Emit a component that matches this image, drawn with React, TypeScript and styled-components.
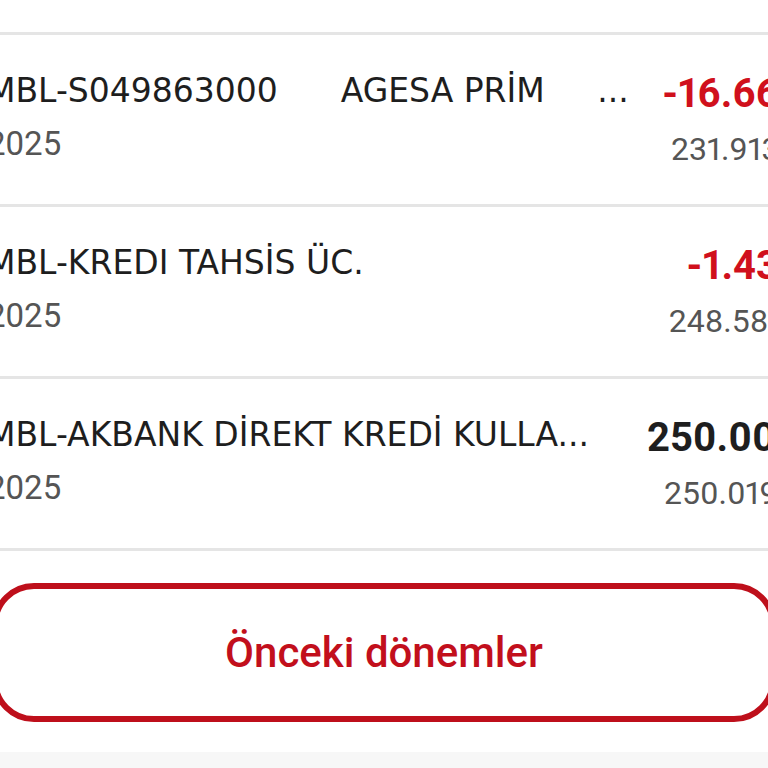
import React from 'react'
import styled, { createGlobalStyle } from 'styled-components'

const GlobalStyle = createGlobalStyle`
  html, body {
    margin: 0;
    padding: 0;
    background: #fff;
    overflow: hidden;
  }
`

const Page = styled.div`
  width: 1005px;
  margin-left: -13px;
  padding-top: 32px;
  background: #fff;
`

const List = styled.ul`
  list-style: none;
  margin: 0;
  padding: 0;
  border-top: 3px solid #e5e5e5;
`

const Row = styled.li`
  box-sizing: border-box;
  display: flex;
  justify-content: space-between;
  align-items: flex-start;
  height: 172px;
  padding: 36px 80px 0 0;
  border-bottom: 3px solid #e5e5e5;
`

const Left = styled.div`
  display: flex;
  flex-direction: column;
  gap: 13px;
`

const Title = styled.div`
  font-family: 'DejaVu Sans', sans-serif;
  font-size: 33px;
  line-height: 40px;
  color: #1e1e1e;
  white-space: pre;
`

const DateText = styled.div`
  font-family: Roboto, sans-serif;
  font-size: 33px;
  line-height: 40px;
  color: #555;
`

const Right = styled.div`
  display: flex;
  flex-direction: column;
  align-items: flex-end;
  gap: 13px;
  margin-top: 1px;
`

const Amount = styled.div<{ $negative?: boolean }>`
  font-family: Roboto, sans-serif;
  font-weight: 700;
  font-size: 40px;
  line-height: 44px;
  font-variant-numeric: proportional-nums;
  color: ${(p) => (p.$negative ? '#d0101c' : '#1e1e1e')};
  white-space: nowrap;
`

const Balance = styled.div`
  font-family: Roboto, sans-serif;
  font-size: 32px;
  line-height: 40px;
  font-variant-numeric: proportional-nums;
  color: #555;
  white-space: nowrap;
  margin-right: 48px;
`

const OutlineButton = styled.button`
  display: flex;
  align-items: center;
  justify-content: center;
  box-sizing: border-box;
  width: 784px;
  height: 139px;
  margin: 32px 0 0 5px;
  padding: 0;
  border: 6px solid #be0f1b;
  border-radius: 42px;
  background: #fff;
  color: #c20f1c;
  font-family: Roboto, sans-serif;
  font-weight: 500;
  font-size: 42px;
  cursor: pointer;
`

const FooterBand = styled.div`
  margin-top: 30px;
  height: 60px;
  background: #f7f7f7;
`

const transactions = [
  {
    title: 'MBL-S049863000      AGESA PRİM     ...',
    date: '2025',
    amount: '-16.666,67 TL',
    balance: '231.913,47 TL',
    negative: true,
  },
  {
    title: 'MBL-KREDI TAHSİS ÜC.',
    date: '2025',
    amount: '-1.437,50 TL',
    balance: '248.581,14 TL',
    negative: true,
  },
  {
    title: 'MBL-AKBANK DİREKT KREDİ KULLA...',
    date: '2025',
    amount: '250.000,00 TL',
    balance: '250.019,64 TL',
    negative: false,
  },
]

const App = () => {
  return (
    <>
      <GlobalStyle />
      <Page>
        <List>
          {transactions.map((item, index) => (
            <Row key={index}>
              <Left>
                <Title>{item.title}</Title>
                <DateText>{item.date}</DateText>
              </Left>
              <Right>
                <Amount $negative={item.negative}>{item.amount}</Amount>
                <Balance>{item.balance}</Balance>
              </Right>
            </Row>
          ))}
        </List>
        <OutlineButton>Önceki dönemler</OutlineButton>
        <FooterBand />
      </Page>
    </>
  )
}

export default App
